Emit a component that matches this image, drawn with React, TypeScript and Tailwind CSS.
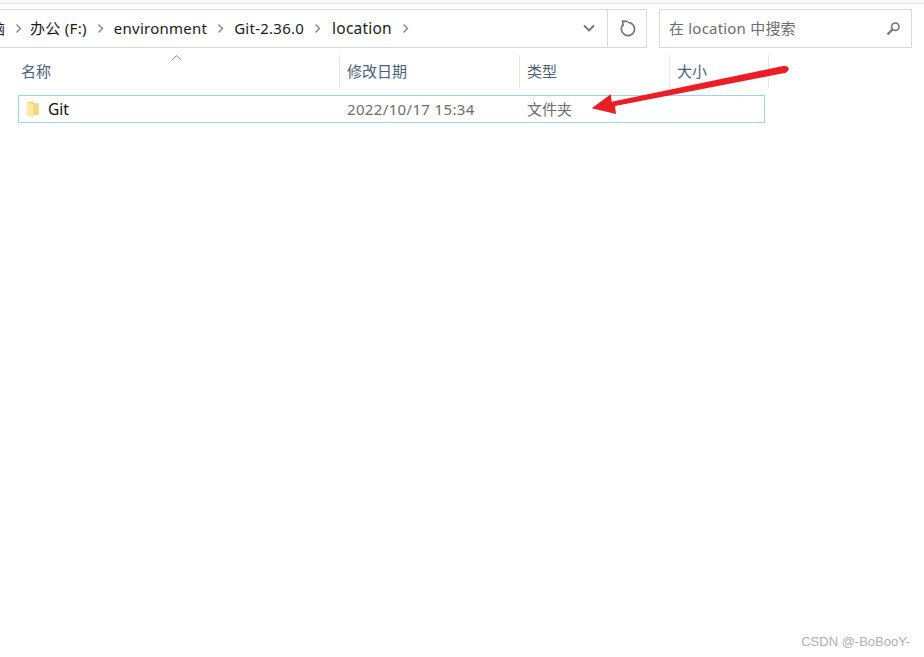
import React from "react";

const font = { fontFamily: '"Noto Sans", "Noto Sans CJK SC", sans-serif' };

function Chevron() {
  return (
    <svg width="7" height="11" viewBox="0 0 7 11" className="shrink-0 mx-[10px]" fill="none">
      <path d="M1.5 1.5 L5.5 5.5 L1.5 9.5" stroke="#858585" strokeWidth="1.4" />
    </svg>
  );
}

const crumbs: [string, string][] = [
  ["办公 (F:)", "text-[15px] tracking-[0.3px] ml-[-2px]"],
  ["environment", "text-[15px] tracking-[0.25px]"],
  ["Git-2.36.0", "text-[15px] tracking-[0.25px]"],
  ["location", "text-[15.5px] tracking-[0.2px] ml-[1px]"],
];
const cols: [string, string][] = [
  ["名称", "w-[321px] pl-[3px]"],
  ["修改日期", "w-[180px] pl-[7px] border-l border-[#e5e5e5]"],
  ["类型", "w-[150px] pl-[7px] border-l border-[#e5e5e5]"],
  ["大小", "w-[100px] pl-[7px] border-l border-r border-[#e5e5e5]"],
];

export default function App() {
  return (
    <div style={font} className="relative w-[924px] h-[657px] bg-white overflow-hidden">
      <div className="h-[4px] bg-[#f8f8f8] border-b border-[#e0e0e0]" />
      <div className="flex mt-[5px] h-[39px]">
        <div className="w-[647px] flex items-center border border-l-0 border-[#d9d9d9] text-[#1a1a1a]">
          <span className="ml-[-10px] w-[15px] overflow-hidden whitespace-nowrap text-[15px]">脑</span>
          <Chevron />
          {crumbs.map(([c, cls]) => (
            <React.Fragment key={c}>
              <span className={`whitespace-nowrap ${cls}`}>{c}</span>
              <Chevron />
            </React.Fragment>
          ))}
          <div className="ml-auto flex items-center h-full">
            <svg width="14" height="9" viewBox="0 0 14 9" fill="none" className="mr-[11px]">
              <path d="M2 1.5 L7 6.5 L12 1.5" stroke="#767676" strokeWidth="1.8" />
            </svg>
            <div className="w-[39px] h-full border-l border-[#d9d9d9] flex items-center justify-center pl-[1px]">
              <svg width="16" height="17" viewBox="0 0 16 17" fill="none">
                <path d="M8 2.4 A6.6 6.6 0 1 1 3.2 4.4" stroke="#767676" strokeWidth="1.7" />
                <path d="M7.6 1.4 L2.6 1.2 L3.2 6.2" stroke="#767676" strokeWidth="1.6" />
              </svg>
            </div>
          </div>
        </div>
        <div className="ml-[12px] w-[253px] flex items-center justify-between border border-[#d9d9d9] pl-[9px] pr-[10px] text-[15px] tracking-[0.2px] text-[#6d6d6d]">
          <span className="whitespace-nowrap">在 location 中搜索</span>
          <svg width="15" height="15" viewBox="0 0 15 15" fill="none">
            <circle cx="9.3" cy="5.7" r="3.7" stroke="#767676" strokeWidth="1.6" />
            <path d="M6.6 8.4 L1.5 13.5" stroke="#767676" strokeWidth="2.2" />
          </svg>
        </div>
      </div>

      <div className="relative flex mt-[7px] ml-[18px] h-[33px] text-[15px] text-[#4c607a]">
        {cols.map(([t, c]) => (
          <div key={t} className={`${c} flex items-center h-full pb-[1px] whitespace-nowrap`}>{t}</div>
        ))}
        <svg width="11" height="6" viewBox="0 0 11 6" fill="none" className="absolute left-[153px] top-[0px]">
          <path d="M0.5 5.5 L5.5 0.8 L10.5 5.5" stroke="#8a8a8a" strokeWidth="1" />
        </svg>
      </div>

      <div className="flex items-center mt-[7px] ml-[18px] w-[747px] h-[28px] border border-[#99d1ff] text-[15px] text-[#6d6d6d] whitespace-nowrap">
        <div className="w-[320px] flex items-center pl-[7px]">
          <svg width="13" height="18" viewBox="0 0 13 18" className="shrink-0 mt-[1px]">
            <path d="M1 1 H7 L8 2.5 H12.5 V14 H1 Z" fill="#f0c95f" />
            <path d="M1 1 L7.5 3 V17 L1 14.5 Z" fill="#fde9a3" />
            <path d="M7.5 3 H12.5 V14 H7.5 Z" fill="#f5d77f" />
          </svg>
          <span className="ml-[9px] mt-[1px] text-[15.5px] text-[#111]">Git</span>
        </div>
        <div className="w-[180px] pl-[8px] tracking-[0.35px]">2022/10/17 15:34</div>
        <div className="pl-[8px]">文件夹</div>
      </div>

      <svg width="924" height="657" className="absolute inset-0 pointer-events-none">
        <path d="M783 66 Q789.5 65.5 788.5 69.5 Q787.5 73 783 73.3 L615 106 L616 114 L591.7 108.3 L610.7 94.3 L611.7 101.7 Z" fill="#ee1c25" />
      </svg>

      <div
        style={{ fontFamily: '"Liberation Sans", sans-serif' }}
        className="absolute right-[14px] bottom-[6px] text-[13px] text-[#b0b0b0] whitespace-nowrap"
      >
        CSDN @-BoBooY-
      </div>
    </div>
  );
}
